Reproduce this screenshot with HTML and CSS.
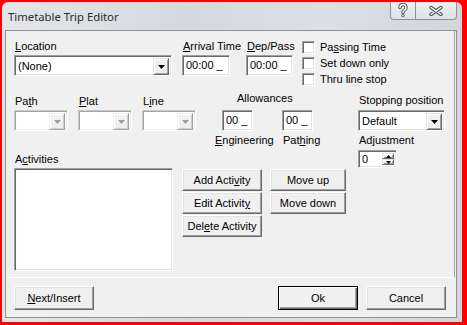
FILE: index.html
```html
<!DOCTYPE html>
<html lang="en">
<head>
    <meta charset="UTF-8">
    <title>Timetable Trip Editor</title>
    <link rel="stylesheet" href="styles.css">
</head>
<body>
<div class="screen">
    <div class="window">
        <div class="titlebar">
            <span class="title">Timetable Trip Editor</span>
            <div class="caption">
                <span class="cap-btn help">
                    <svg width="12" height="15" viewBox="0 0 12 15">
                        <path d="M3 4.5 A3 3 0 1 1 7.2 7.2 C6 7.8 6 8.4 6 9.6" fill="none" stroke="#4d535a" stroke-width="3.4" stroke-linecap="round"/>
                        <circle cx="6" cy="12.6" r="1.7" fill="#4d535a"/>
                        <path d="M3 4.5 A3 3 0 1 1 7.2 7.2 C6 7.8 6 8.4 6 9.6" fill="none" stroke="#fff" stroke-width="1.4" stroke-linecap="round"/>
                        <circle cx="6" cy="12.6" r="0.8" fill="#fff"/>
                    </svg>
                </span>
                <span class="cap-btn close">
                    <svg width="14" height="10" viewBox="0 0 14 10">
                        <path d="M2 1.5 L12 8.5 M12 1.5 L2 8.5" fill="none" stroke="#4d535a" stroke-width="3.4" stroke-linecap="round"/>
                        <path d="M2 1.5 L12 8.5 M12 1.5 L2 8.5" fill="none" stroke="#fff" stroke-width="1.4" stroke-linecap="round"/>
                    </svg>
                </span>
            </div>
        </div>

        <div class="client">
            <div class="panel">
                <div class="row1">
                    <div class="field f-location">
                        <label><u>L</u>ocation</label>
                        <div class="combo w-location">
                            <span class="combo-text">(None)</span>
                            <span class="drop-btn"><svg width="7" height="4"><polygon points="0,0 7,0 3.5,4"/></svg></span>
                        </div>
                    </div>
                    <div class="field f-arrival">
                        <label><u>A</u>rrival Time</label>
                        <div class="edit w-time">00:00 _</div>
                    </div>
                    <div class="field f-dep">
                        <label><u>D</u>ep/Pass</label>
                        <div class="edit w-time2">00:00 _</div>
                    </div>
                    <div class="checks">
                        <div class="check-row"><span class="checkbox"></span>Pa<u>s</u>sing Time</div>
                        <div class="check-row"><span class="checkbox"></span>Set down only</div>
                        <div class="check-row"><span class="checkbox"></span>Thru line stop</div>
                    </div>
                </div>

                <div class="mid">
                    <div class="left">
                        <div class="row2">
                            <div class="field f-small">
                                <label>Pa<u>t</u>h</label>
                                <div class="combo disabled w-small">
                                    <span class="combo-text"></span>
                                    <span class="drop-btn"><svg width="7" height="4"><polygon points="0,0 7,0 3.5,4"/></svg></span>
                                </div>
                            </div>
                            <div class="field f-small">
                                <label><u>P</u>lat</label>
                                <div class="combo disabled w-small">
                                    <span class="combo-text"></span>
                                    <span class="drop-btn"><svg width="7" height="4"><polygon points="0,0 7,0 3.5,4"/></svg></span>
                                </div>
                            </div>
                            <div class="field f-line">
                                <label>L<u>i</u>ne</label>
                                <div class="combo disabled w-small">
                                    <span class="combo-text"></span>
                                    <span class="drop-btn"><svg width="7" height="4"><polygon points="0,0 7,0 3.5,4"/></svg></span>
                                </div>
                            </div>
                            <div class="allowances">
                                <div class="allow-title">Allowances</div>
                                <div class="allow-cols">
                                    <div class="allow-col eng">
                                        <div class="edit w-allow">00 _</div>
                                        <label><u>E</u>ngineering</label>
                                    </div>
                                    <div class="allow-col">
                                        <div class="edit w-allow">00 _</div>
                                        <label>Pat<u>h</u>ing</label>
                                    </div>
                                </div>
                            </div>
                        </div>

                        <div class="row3">
                            <div class="field f-activities">
                                <label>A<u>c</u>tivities</label>
                                <div class="listbox"></div>
                            </div>
                            <div class="btn-col">
                                <button class="btn w-act">Add Acti<u>v</u>ity</button>
                                <button class="btn w-act">Edit Activit<u>y</u></button>
                                <button class="btn w-act">Del<u>e</u>te Activity</button>
                            </div>
                            <div class="btn-col">
                                <button class="btn w-move">Move up</button>
                                <button class="btn w-move">Move down</button>
                            </div>
                        </div>
                    </div>

                    <div class="stopcol">
                        <label class="stop-label">Stopping position</label>
                        <div class="combo w-stop">
                            <span class="combo-text">Default</span>
                            <span class="drop-btn"><svg width="7" height="4"><polygon points="0,0 7,0 3.5,4"/></svg></span>
                        </div>
                        <label class="adj-label">Adjustment</label>
                        <div class="edit spin">
                            <span>0</span>
                            <span class="spin-btns">
                                <span class="spin-btn"><svg width="5" height="3"><polygon points="2.5,0 5,3 0,3"/></svg></span>
                                <span class="spin-btn"><svg width="5" height="3"><polygon points="0,0 5,0 2.5,3"/></svg></span>
                            </span>
                        </div>
                    </div>
                </div>
            </div>

            <div class="footer">
                <button class="btn w-foot"><u>N</u>ext/Insert</button>
                <span class="spacer"></span>
                <button class="btn w-foot default">Ok</button>
                <button class="btn w-foot">Cancel</button>
            </div>
        </div>
    </div>
</div>
</body>
</html>
```

FILE: styles.css
```css
* {
    box-sizing: border-box;
}
body {
    margin: 0;
    background: #f00;
    font-family: "Liberation Sans", Arial, sans-serif;
    font-size: 11px;
    color: #000;
}
u {
    text-decoration-thickness: 1px;
    text-underline-offset: 1px;
}
.screen {
    width: 467px;
    height: 325px;
    padding: 2px 5px 3px 2px;
    background: #f00;
}
.window {
    height: 100%;
    display: flex;
    flex-direction: column;
    padding: 0 5px 4px 3px;
    border-radius: 6px 6px 0 0;
    background: linear-gradient(90deg, #e3e6e9 0%, #d5d9dd 40%, #dcdfe3 70%, #d2d6da 100%);
}
.titlebar {
    height: 28px;
    display: flex;
    justify-content: space-between;
    align-items: flex-start;
}
.title {
    margin: 7px 0 0 3px;
    font-family: "Noto Sans", sans-serif;
    font-size: 11.3px;
    color: #2a2a2a;
}
.caption {
    display: flex;
}
.cap-btn {
    height: 18px;
    display: flex;
    align-items: center;
    justify-content: center;
    border: 1px solid #8d9399;
    border-top: none;
    background: linear-gradient(#eef0f2, #dfe2e5);
}
.help {
    width: 25px;
    border-right: none;
    border-radius: 0 0 0 4px;
}
.close {
    width: 42px;
    border-radius: 0 0 4px 0;
}
.client {
    flex: 1;
    display: flex;
    flex-direction: column;
    background: #f0f0f0;
    border: 1px solid #8e9399;
}
.panel {
    height: 247px;
    padding: 9px 0 0 8px;
    border-right: 1px solid #a0a0a0;
    border-bottom: 1px solid #fff;
    margin-right: 1px;
}
label {
    display: block;
    height: 13px;
    line-height: 13px;
    padding-left: 1px;
    margin-bottom: 2px;
    white-space: nowrap;
}

/* 3d borders */
.edit, .combo, .listbox, .checkbox {
    background: #fff;
    border: 1px solid;
    border-color: #a0a0a0 #fff #fff #a0a0a0;
    box-shadow: inset 1px 1px #696969, inset -1px -1px #e3e3e3;
}
.edit {
    height: 21px;
    padding: 2px 0 0 3px;
    line-height: 15px;
}
.combo {
    height: 21px;
    display: flex;
    justify-content: space-between;
    padding: 2px;
}
.combo-text {
    padding-left: 1px;
    line-height: 17px;
}
.drop-btn, .spin-btn {
    background: #f0f0f0;
    border: 1px solid;
    border-color: #e3e3e3 #696969 #696969 #e3e3e3;
    box-shadow: inset 1px 1px #fff, inset -1px -1px #a0a0a0;
    display: flex;
    align-items: center;
    justify-content: center;
}
.drop-btn {
    width: 16px;
    height: 17px;
}
.drop-btn polygon {
    fill: #000;
}
.combo.disabled {
    border-color: #c8c8c8 #fff #fff #c8c8c8;
    box-shadow: inset 1px 1px #a6a6a6, inset -1px -1px #ececec;
}
.combo.disabled .drop-btn {
    border-color: #f0f0f0 #a0a0a0 #a0a0a0 #f0f0f0;
    box-shadow: inset 1px 1px #fff, inset -1px -1px #d0d0d0;
}
.combo.disabled .drop-btn polygon {
    fill: #a0a0a0;
}

.row1 {
    display: flex;
}
.f-location { width: 168px; }
.f-arrival { width: 64px; }
.f-dep { width: 56px; }
.w-location { width: 158px; }
.w-time { width: 48px; }
.w-time2 { width: 47px; }
.checks {
    padding-top: 1px;
}
.check-row {
    height: 16px;
    display: flex;
    align-items: flex-start;
    line-height: 13px;
}
.checkbox {
    width: 13px;
    height: 13px;
    margin-right: 5px;
}

.mid {
    display: flex;
    margin-top: 3px;
}
.left {
    width: 344px;
}
.row2 {
    display: flex;
}
.f-small {
    width: 64px;
    padding-top: 3px;
}
.f-line {
    width: 72px;
    padding-top: 3px;
}
.w-small { width: 54px; }
.allow-title {
    height: 13px;
    line-height: 13px;
    padding-left: 23px;
}
.allow-cols {
    display: flex;
    margin-top: 5px;
}
.allow-col {
    width: 68px;
}
.allow-col.eng .edit {
    margin-left: 8px;
}
.allow-col label {
    margin-top: 3px;
}
.w-allow { width: 31px; }

.row3 {
    display: flex;
    margin-top: 4px;
}
.f-activities { width: 168px; }
.listbox {
    width: 159px;
    height: 103px;
}
.btn-col {
    display: flex;
    flex-direction: column;
    gap: 1px;
    padding-top: 16px;
    width: 88px;
}

.btn {
    height: 22px;
    padding: 0;
    font-family: inherit;
    font-size: 11px;
    color: #000;
    background: #f0f0f0;
    border: 1px solid;
    border-color: #fff #696969 #696969 #fff;
    box-shadow: inset -1px -1px #a0a0a0, inset 1px 1px #e3e3e3;
}
.w-act { width: 80px; }
.w-move { width: 76px; }

.stopcol {
    padding-top: 2px;
}
.stop-label {
    margin-bottom: 3px;
}
.w-stop { width: 87px; }
.adj-label {
    margin-top: 3px;
    margin-bottom: 3px;
}
.spin {
    width: 39px;
    height: 18px;
    display: flex;
    justify-content: space-between;
    padding: 2px 2px 2px 3px;
    line-height: 13px;
}
.spin-btns {
    display: flex;
    flex-direction: column;
    width: 12px;
}
.spin-btn {
    flex: 1;
}

.footer {
    display: flex;
    gap: 8px;
    padding: 8px 10px 0 8px;
}
.spacer {
    flex: 1;
}
.w-foot {
    width: 80px;
    height: 24px;
}
.btn.default {
    border: 1px solid #000;
    box-shadow: inset 1px 1px #fff, inset -1px -1px #696969, inset -2px -2px #a0a0a0;
}
```
